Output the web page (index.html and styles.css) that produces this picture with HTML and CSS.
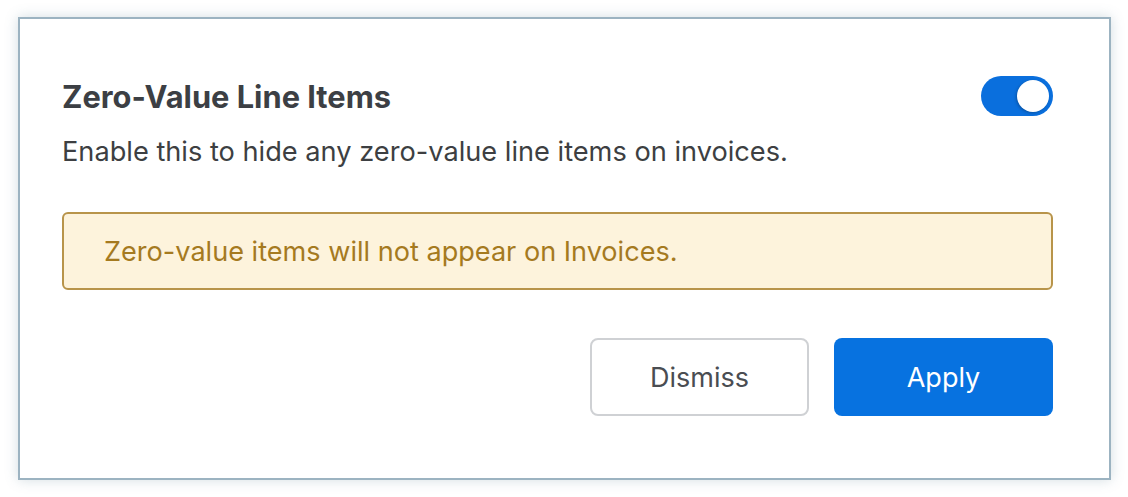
FILE: index.html
```html
<!DOCTYPE html>
<html lang="en">

<head>
    <meta charset="UTF-8">
    <meta name="viewport" content="width=device-width, initial-scale=1.0">
    <title>Zero-Value Line Items</title>
    <link rel="stylesheet" href="styles.css">
</head>

<body>
    <div class="card">
        <div class="header">
            <h1 class="title">Zero-Value Line Items</h1>
            <label class="toggle">
                <span class="knob"></span>
            </label>
        </div>
        <p class="desc">Enable this to hide any zero-value line items on invoices.</p>
        <div class="notice">Zero-value items will not appear on Invoices.</div>
        <div class="actions">
            <button class="btn btn-secondary">Dismiss</button>
            <button class="btn btn-primary">Apply</button>
        </div>
    </div>
</body>

</html>
```

FILE: styles.css
```css
body {
    margin: 0;
    padding: 17px 17px 17px 18px;
    font-family: Inter, "Noto Sans", sans-serif;
    background: #ffffff;
}

.card {
    box-sizing: border-box;
    width: 1093px;
    height: 463px;
    border: 2px solid #9cb3c1;
    background: #ffffff;
    box-shadow: 0 0 12px rgba(80, 120, 140, 0.25);
    padding: 57px 56px 0 42px;
}

.header {
    display: flex;
    justify-content: space-between;
    align-items: center;
    height: 40px;
}

.title {
    margin: 0;
    font-size: 30.8px;
    font-weight: 700;
    color: #3c3f44;
}

.toggle {
    position: relative;
    width: 72px;
    height: 40px;
    border-radius: 20px;
    background: #0a6fdd;
    cursor: pointer;
}

.knob {
    position: absolute;
    top: 4px;
    right: 4px;
    width: 32px;
    height: 32px;
    border-radius: 50%;
    background: #ffffff;
    box-shadow: -1px 1px 3px rgba(0, 0, 0, 0.25);
}

.desc {
    margin: 20px 0 0;
    font-size: 27.2px;
    line-height: 32px;
    color: #3d3f42;
}

.notice {
    box-sizing: border-box;
    margin-top: 44px;
    height: 78px;
    display: flex;
    align-items: center;
    padding-left: 40px;
    border: 2px solid #b8944a;
    border-radius: 6px;
    background: #fdf3dc;
    color: #a57a1f;
    font-size: 27.1px;
}

.actions {
    display: flex;
    justify-content: flex-end;
    gap: 25px;
    margin-top: 48px;
}

.btn {
    box-sizing: border-box;
    width: 219px;
    height: 78px;
    border-radius: 8px;
    font-family: inherit;
    font-size: 27px;
    cursor: pointer;
}

.btn-secondary {
    background: #ffffff;
    border: 2px solid #cfd1d4;
    color: #4a4d52;
}

.btn-primary {
    background: #0772e0;
    border: none;
    color: #ffffff;
}
```
